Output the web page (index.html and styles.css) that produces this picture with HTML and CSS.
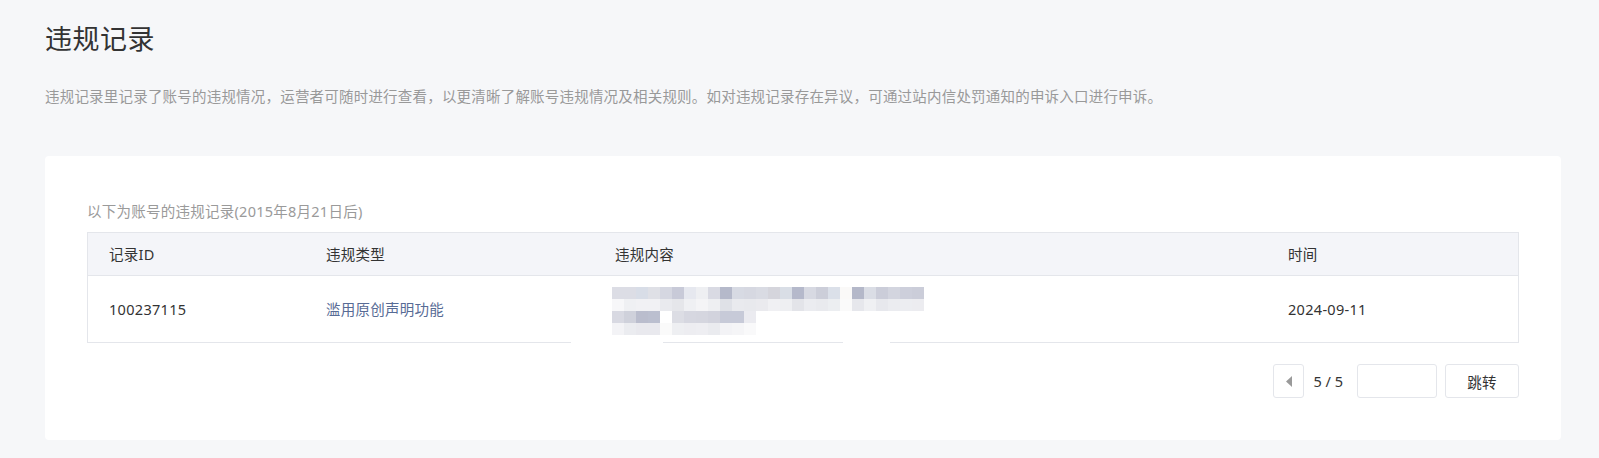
FILE: index.html
```html
<!DOCTYPE html>
<html lang="zh-CN">
<head>
<meta charset="utf-8">
<title>违规记录</title>
<link rel="stylesheet" href="styles.css">
</head>
<body>
<div class="page">
  <h1 class="title">违规记录</h1>
  <p class="desc">违规记录里记录了账号的违规情况，运营者可随时进行查看，以更清晰了解账号违规情况及相关规则。如对违规记录存在异议，可通过站内信处罚通知的申诉入口进行申诉。</p>
  <div class="card">
    <p class="sub">以下为账号的违规记录(2015年8月21日后)</p>
    <div class="table">
      <div class="row head">
        <div class="cell">记录ID</div>
        <div class="cell">违规类型</div>
        <div class="cell">违规内容</div>
        <div class="cell">时间</div>
      </div>
      <div class="row body">
        <div class="cell num">100237115</div>
        <div class="cell type">滥用原创声明功能</div>
        <div class="cell content">
          <svg class="mosaic" width="312" height="48" viewBox="0 0 312 48" shape-rendering="crispEdges">
            <g>
              <rect x="0" y="0" width="12" height="12" fill="#dcdde5"/>
              <rect x="12" y="0" width="12" height="12" fill="#dcdde5"/>
              <rect x="24" y="0" width="12" height="12" fill="#d8dde7"/>
              <rect x="36" y="0" width="12" height="12" fill="#dfe0e6"/>
              <rect x="48" y="0" width="12" height="12" fill="#d5d7e1"/>
              <rect x="60" y="0" width="12" height="12" fill="#c8cad8"/>
              <rect x="72" y="0" width="12" height="12" fill="#e6e8ef"/>
              <rect x="84" y="0" width="12" height="12" fill="#eeeff2"/>
              <rect x="96" y="0" width="12" height="12" fill="#d9dae3"/>
              <rect x="108" y="0" width="12" height="12" fill="#b5b9ca"/>
              <rect x="120" y="0" width="12" height="12" fill="#d7dae3"/>
              <rect x="132" y="0" width="12" height="12" fill="#d6d8e1"/>
              <rect x="144" y="0" width="12" height="12" fill="#d9dbe3"/>
              <rect x="156" y="0" width="12" height="12" fill="#d5d5dc"/>
              <rect x="168" y="0" width="12" height="12" fill="#d9dee6"/>
              <rect x="180" y="0" width="12" height="12" fill="#b5b9cb"/>
              <rect x="192" y="0" width="12" height="12" fill="#d7d9e2"/>
              <rect x="204" y="0" width="12" height="12" fill="#ccced9"/>
              <rect x="216" y="0" width="12" height="12" fill="#dbe0e9"/>
              <rect x="228" y="0" width="12" height="12" fill="#faf9f8"/>
              <rect x="240" y="0" width="12" height="12" fill="#b4b8c9"/>
              <rect x="252" y="0" width="12" height="12" fill="#dadde5"/>
              <rect x="264" y="0" width="12" height="12" fill="#cbcdd9"/>
              <rect x="276" y="0" width="12" height="12" fill="#d3d5df"/>
              <rect x="288" y="0" width="12" height="12" fill="#cdcfdb"/>
              <rect x="300" y="0" width="12" height="12" fill="#cbcdd9"/>
            </g>
            <g>
              <rect x="0" y="12" width="12" height="12" fill="#f7f7f9"/>
              <rect x="12" y="12" width="12" height="12" fill="#eff0f3"/>
              <rect x="24" y="12" width="12" height="12" fill="#f1f1f4"/>
              <rect x="36" y="12" width="12" height="12" fill="#f1f1f4"/>
              <rect x="48" y="12" width="12" height="12" fill="#e9eaee"/>
              <rect x="60" y="12" width="12" height="12" fill="#e5e6ea"/>
              <rect x="72" y="12" width="12" height="12" fill="#eff0f3"/>
              <rect x="84" y="12" width="12" height="12" fill="#f4f4f6"/>
              <rect x="96" y="12" width="12" height="12" fill="#eeeff2"/>
              <rect x="108" y="12" width="12" height="12" fill="#dfe1e7"/>
              <rect x="120" y="12" width="12" height="12" fill="#e9eaee"/>
              <rect x="132" y="12" width="12" height="12" fill="#e8e9ed"/>
              <rect x="144" y="12" width="12" height="12" fill="#eaeaee"/>
              <rect x="156" y="12" width="12" height="12" fill="#f0f0f3"/>
              <rect x="168" y="12" width="12" height="12" fill="#eeeff2"/>
              <rect x="180" y="12" width="12" height="12" fill="#e3e4e9"/>
              <rect x="192" y="12" width="12" height="12" fill="#ebecf0"/>
              <rect x="204" y="12" width="12" height="12" fill="#e9eaee"/>
              <rect x="216" y="12" width="12" height="12" fill="#eceef1"/>
              <rect x="228" y="12" width="12" height="12" fill="#fafafa"/>
              <rect x="240" y="12" width="12" height="12" fill="#e6e7ec"/>
              <rect x="252" y="12" width="12" height="12" fill="#eff0f3"/>
              <rect x="264" y="12" width="12" height="12" fill="#e7e8ed"/>
              <rect x="276" y="12" width="12" height="12" fill="#ebecf0"/>
              <rect x="288" y="12" width="12" height="12" fill="#ecedf1"/>
              <rect x="300" y="12" width="12" height="12" fill="#ececf0"/>
            </g>
            <g>
              <rect x="0" y="24" width="12" height="12" fill="#d8d9e2"/>
              <rect x="12" y="24" width="12" height="12" fill="#cfd1db"/>
              <rect x="24" y="24" width="12" height="12" fill="#babdcd"/>
              <rect x="36" y="24" width="12" height="12" fill="#bbbfcf"/>
              <rect x="48" y="24" width="12" height="12" fill="#ffffff"/>
              <rect x="60" y="24" width="12" height="12" fill="#dcdde4"/>
              <rect x="72" y="24" width="12" height="12" fill="#d6d7e0"/>
              <rect x="84" y="24" width="12" height="12" fill="#d5d6df"/>
              <rect x="96" y="24" width="12" height="12" fill="#d2d3dd"/>
              <rect x="108" y="24" width="12" height="12" fill="#c7cad8"/>
              <rect x="120" y="24" width="12" height="12" fill="#c7cad8"/>
              <rect x="132" y="24" width="12" height="12" fill="#ebebf0"/>
            </g>
            <g>
              <rect x="0" y="36" width="12" height="12" fill="#f3f3f6"/>
              <rect x="12" y="36" width="12" height="12" fill="#ebecf0"/>
              <rect x="24" y="36" width="12" height="12" fill="#e9e9ee"/>
              <rect x="36" y="36" width="12" height="12" fill="#e9e9ee"/>
              <rect x="48" y="36" width="12" height="12" fill="#fafafa"/>
              <rect x="60" y="36" width="12" height="12" fill="#eeeff2"/>
              <rect x="72" y="36" width="12" height="12" fill="#ededf1"/>
              <rect x="84" y="36" width="12" height="12" fill="#eeeef2"/>
              <rect x="96" y="36" width="12" height="12" fill="#eaebef"/>
              <rect x="108" y="36" width="12" height="12" fill="#f3f3f6"/>
              <rect x="120" y="36" width="12" height="12" fill="#f5f5f7"/>
              <rect x="132" y="36" width="12" height="12" fill="#f9f9fa"/>
            </g>
          </svg>
          <span class="smear smear-a"></span>
          <span class="smear smear-b"></span>
        </div>
        <div class="cell num">2024-09-11</div>
      </div>
    </div>
    <div class="pager">
      <button class="btn prev" type="button" aria-label="上一页">
        <svg width="6" height="11" viewBox="0 0 6 11"><polygon points="6,0 6,11 0,5.5" fill="#9a9a9a"/></svg>
      </button>
      <span class="count">5 / 5</span>
      <input class="jump-input" type="text">
      <button class="btn jump" type="button">跳转</button>
    </div>
  </div>
</div>
</body>
</html>
```

FILE: styles.css
```css
* {
  box-sizing: border-box;
}

html, body {
  margin: 0;
  padding: 0;
}

body {
  background: #f6f7f9;
  font-family: "Noto Sans", "Noto Sans CJK SC", sans-serif;
  color: #333;
}

.page {
  padding: 20px 38px 18px 45px;
}

.title {
  margin: 0;
  font-size: 27px;
  line-height: 38px;
  font-weight: 400;
  letter-spacing: 0.5px;
  color: #333;
}

.desc {
  margin: 27px 0 0;
  font-size: 14.5px;
  line-height: 22px;
  letter-spacing: 0.2px;
  color: #999;
}

.card {
  margin-top: 49px;
  background: #fff;
  border-radius: 4px;
  padding: 45px 42px 42px;
}

.sub {
  margin: 0 0 11px;
  font-size: 14.5px;
  line-height: 20px;
  letter-spacing: 0.25px;
  color: #9a9a9a;
}

.table {
  border: 1px solid #e4e6eb;
}

.row {
  display: grid;
  grid-template-columns: 217px 289px 673px 1fr;
  align-items: center;
}

.row.head {
  height: 43px;
  background: #f4f5f9;
  border-bottom: 1px solid #e4e6eb;
}

.row.body {
  height: 66px;
  background: #fff;
}

.cell {
  padding-left: 21px;
  font-size: 14.5px;
  line-height: 20px;
  letter-spacing: 0.25px;
  color: #333;
}

.cell.num {
  letter-spacing: 0.3px;
}

.cell.type {
  color: #576b95;
}

.cell.content {
  position: relative;
  height: 66px;
  padding-left: 18px;
  padding-top: 11px;
}

.mosaic {
  display: block;
}

.smear {
  position: absolute;
  bottom: -1px;
  height: 1px;
  background: #fff;
}

.smear-a {
  left: -23px;
  width: 92px;
}

.smear-b {
  left: 249px;
  width: 47px;
}

.pager {
  margin-top: 21px;
  display: flex;
  justify-content: flex-end;
  align-items: center;
}

.btn {
  height: 34px;
  border: 1px solid #e4e6eb;
  border-radius: 3px;
  background: #fff;
  font-family: inherit;
  color: #333;
  padding: 0;
  cursor: pointer;
}

.prev {
  width: 31px;
  display: flex;
  align-items: center;
  justify-content: center;
}

.prev svg {
  display: block;
}

.count {
  margin: 0 14px 0 9px;
  font-size: 14.5px;
  line-height: 20px;
  color: #333;
}

.jump-input {
  width: 80px;
  height: 34px;
  border: 1px solid #e4e6eb;
  border-radius: 3px;
  background: #fff;
  outline: none;
  padding: 0 8px;
  font-family: inherit;
  font-size: 14px;
}

.jump {
  margin-left: 8px;
  width: 74px;
  font-size: 14.5px;
  letter-spacing: 0.25px;
}
```
